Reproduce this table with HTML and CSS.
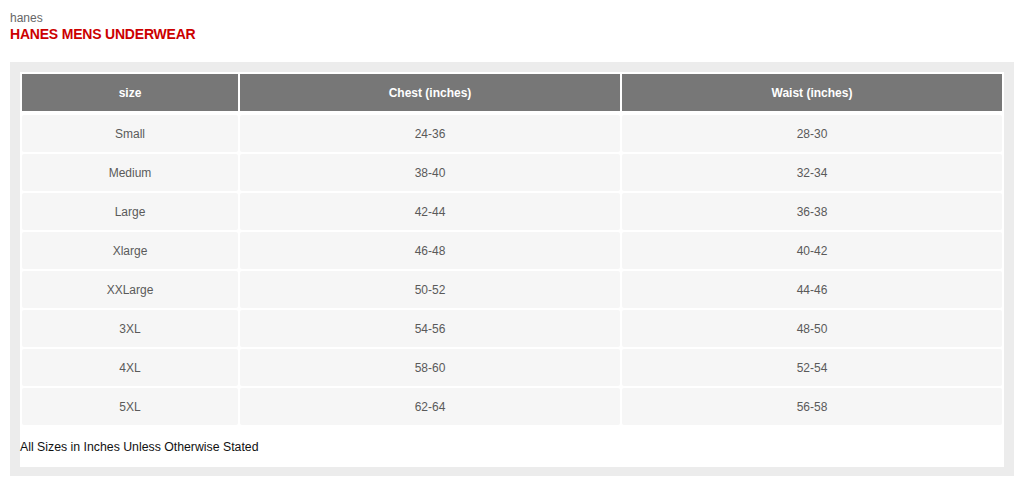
FILE: index.html
```html
<!DOCTYPE html>
<html>
<head>
<meta charset="utf-8">
<link rel="stylesheet" href="styles.css">
</head>
<body>
<div class="brand">hanes</div>
<h1 class="title">HANES MENS UNDERWEAR</h1>
<div class="chart-box">
  <div class="chart-inner">
    <table class="size-table">
      <colgroup>
        <col class="c1"><col class="c2"><col class="c3">
      </colgroup>
      <thead>
        <tr><th>size</th><th>Chest (inches)</th><th>Waist (inches)</th></tr>
      </thead>
      <tbody>
        <tr><td>Small</td><td>24-36</td><td>28-30</td></tr>
        <tr><td>Medium</td><td>38-40</td><td>32-34</td></tr>
        <tr><td>Large</td><td>42-44</td><td>36-38</td></tr>
        <tr><td>Xlarge</td><td>46-48</td><td>40-42</td></tr>
        <tr><td>XXLarge</td><td>50-52</td><td>44-46</td></tr>
        <tr><td>3XL</td><td>54-56</td><td>48-50</td></tr>
        <tr><td>4XL</td><td>58-60</td><td>52-54</td></tr>
        <tr><td>5XL</td><td>62-64</td><td>56-58</td></tr>
      </tbody>
    </table>
    <div class="note">All Sizes in Inches Unless Otherwise Stated</div>
  </div>
</div>
</body>
</html>
```

FILE: styles.css
```css
html, body {
  margin: 0;
  background: #ffffff;
}
body {
  padding: 10px 10px 0 10px;
  font-family: "Liberation Sans", Arial, sans-serif;
}
.brand {
  font-size: 12px;
  line-height: 16px;
  color: #666666;
}
.title {
  margin: 0 0 20px 0;
  font-size: 14px;
  line-height: 16px;
  font-weight: bold;
  color: #cc0000;
  letter-spacing: -0.2px;
}
.chart-box {
  background: #ececec;
  padding: 10px 10px 9px 10px;
}
.chart-inner {
  background: #ffffff;
}
.size-table {
  width: 100%;
  border-collapse: separate;
  border-spacing: 2px;
  table-layout: fixed;
}
.c1 { width: 216px; }
.c2 { width: 380px; }
.c3 { width: 380px; }
.size-table th {
  background: #777777;
  color: #ffffff;
  font-weight: bold;
  font-size: 12px;
  height: 37px;
  padding: 0;
  text-align: center;
  border-bottom: 2px solid #ffffff;
  background-clip: padding-box;
}
.size-table td {
  background: #f6f6f6;
  color: #5a5a5a;
  font-size: 12px;
  height: 37px;
  padding: 0;
  text-align: center;
  border-radius: 2px;
}
.note {
  font-size: 12.3px;
  line-height: 38px;
  color: #111111;
  padding-top: 1px;
  padding-bottom: 1px;
}
```
